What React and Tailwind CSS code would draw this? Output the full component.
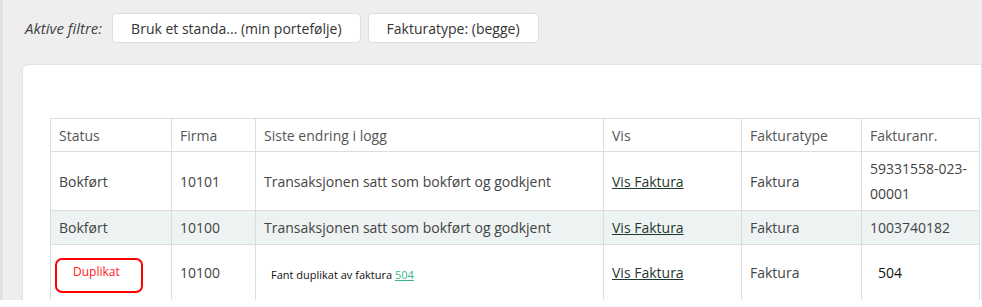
import React from "react";

const font = { fontFamily: '"Open Sans", "Liberation Sans", sans-serif' };

function FilterChip({ label }) {
  return (
    <div className="h-[30px] flex items-center px-[18px] bg-white border border-[#dddddd] rounded-[4px] text-[14px] text-[#333333]">
      {label}
    </div>
  );
}

function VisLink() {
  return <span className="underline text-[#1f3a30] decoration-[#1f3a30]">Vis Faktura</span>;
}

const cell = "border border-[#dddddd] px-2 py-1 align-middle";
const head = "border border-[#dddddd] px-2 py-[3.5px] align-middle font-normal";

export default function App() {
  return (
    <div className="w-[982px] h-[307px] overflow-hidden flex flex-col bg-white" style={font}>
      <div className="h-[300px] flex overflow-hidden bg-[#eeeeee]">
        <div className="w-[3px] shrink-0 bg-[#dde5e3]" />
        <div className="flex-1 flex flex-col pl-[19px]">
          {/* Aktive filtre */}
          <div className="flex items-center gap-[7px] mt-[13px] h-[30px]">
            <span className="italic text-[15px] text-[#444444] pl-[3px] pr-[3px]">Aktive filtre:</span>
            <FilterChip label="Bruk et standa... (min portefølje)" />
            <FilterChip label="Fakturatype: (begge)" />
          </div>

          {/* Card */}
          <div className="mt-[21px] w-[960px] shrink-0 h-[400px] bg-white border border-[#e3e3e3] rounded-tl-[6px] pt-[53px] pl-[27px]">
            <table className="table-fixed border-collapse w-[929px] text-[14px] leading-[25px] text-[#444444]">
              <colgroup>
                <col className="w-[121px]" />
                <col className="w-[84px]" />
                <col className="w-[348px]" />
                <col className="w-[138px]" />
                <col className="w-[120px]" />
                <col className="w-[118px]" />
              </colgroup>
              <thead>
                <tr className="text-left text-[#555555]">
                  <th className={head}>Status</th>
                  <th className={head}>Firma</th>
                  <th className={head}>Siste endring i logg</th>
                  <th className={head}>Vis</th>
                  <th className={head}>Fakturatype</th>
                  <th className={head}>Fakturanr.</th>
                </tr>
              </thead>
              <tbody>
                <tr>
                  <td className={cell}>Bokført</td>
                  <td className={cell}>10101</td>
                  <td className={cell}>Transaksjonen satt som bokført og godkjent</td>
                  <td className={cell}><VisLink /></td>
                  <td className={cell}>Faktura</td>
                  <td className={cell}>59331558-023-00001</td>
                </tr>
                <tr className="bg-[#edf2f2]">
                  <td className={cell}>Bokført</td>
                  <td className={cell}>10100</td>
                  <td className={cell}>Transaksjonen satt som bokført og godkjent</td>
                  <td className={cell}><VisLink /></td>
                  <td className={cell}>Faktura</td>
                  <td className={cell}>1003740182</td>
                </tr>
                <tr>
                  <td className="border border-[#dddddd] pl-[4px] py-1 align-top">
                    <div className="mt-[9px] mb-[3px] w-[88px] h-[35px] border-2 border-[#ff0000] rounded-[7px] pl-4 pt-[3px] text-[12px] leading-[18px] text-[#ff2020]">
                      Duplikat
                    </div>
                  </td>
                  <td className={cell}>10100</td>
                  <td className={cell}>
                    <span className="pl-[7px] pt-[3px] inline-block text-[11px] font-medium text-[#111111]">
                      Fant duplikat av faktura{" "}
                      <span className="underline text-[#3cb38a]">504</span>
                    </span>
                  </td>
                  <td className={cell}><VisLink /></td>
                  <td className={cell}>Faktura</td>
                  <td className={cell}>
                    <span className="pl-2 text-[#111111]">504</span>
                  </td>
                </tr>
              </tbody>
            </table>
          </div>
        </div>
      </div>
      <div className="h-[7px] bg-white" />
    </div>
  );
}
